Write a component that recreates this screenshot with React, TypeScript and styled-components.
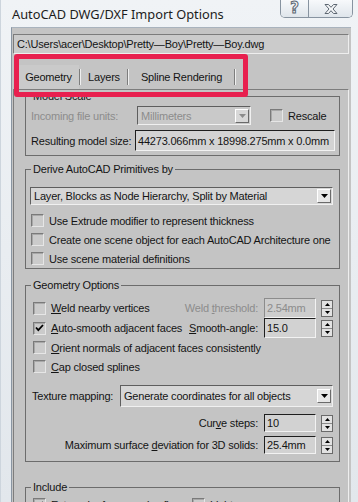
import React from "react";
import styled, { createGlobalStyle } from "styled-components";

const GlobalStyle = createGlobalStyle`
  *, *::before, *::after { box-sizing: border-box; }
  html, body { margin: 0; padding: 0; background: #e6ebf0; }
`;

const Window = styled.div`
  position: relative;
  width: 358px;
  height: 502px;
  overflow: hidden;
  display: flex;
  flex-direction: column;
  background: linear-gradient(#f0f3f6, #e2e7ec);
  border-left: 1px solid #cdd5dd;
`;

const TitleBar = styled.div`
  height: 27px;
  flex-shrink: 0;
  display: flex;
  align-items: flex-start;
  padding-left: 11px;
`;

const Title = styled.div`
  margin-top: 6px;
  font-family: "Noto Sans", "Open Sans", sans-serif;
  font-size: 12.8px;
  line-height: 17px;
  color: #1c1c1c;
`;

const CaptionButtons = styled.div`
  margin-left: auto;
  margin-right: 5px;
  height: 18px;
  display: flex;
  border: 1px solid #8793a0;
  border-top: none;
  border-radius: 0 0 5px 5px;
  overflow: hidden;
`;

const CaptionButton = styled.div<{ $w: number }>`
  width: ${(p) => p.$w}px;
  display: flex;
  align-items: center;
  justify-content: center;
  background: linear-gradient(#f7f9fb, #dfe5eb);
  & + & {
    border-left: 1px solid #8793a0;
  }
`;

const HelpGlyph = styled.span`
  font-family: "DejaVu Sans", sans-serif;
  font-size: 15px;
  font-weight: bold;
  line-height: 15px;
  color: #f4f6f8;
  -webkit-text-stroke: 1px #5d6772;
`;

const Client = styled.div`
  position: relative;
  flex: 1;
  margin: 0 7px 0 10px;
  padding: 6px 1px 0 1px;
  display: flex;
  flex-direction: column;
  background: #c4c4c4;
  border-left: 1px solid #8a96a3;
  border-top: 1px solid #a9b3bd;
  font-family: "Liberation Sans", Arial, sans-serif;
  font-size: 11px;
  letter-spacing: -0.2px;
  color: #141414;
`;

const PathField = styled.div`
  height: 20px;
  margin-right: 1px;
  display: flex;
  align-items: center;
  padding-left: 3px;
  background: #cbcbcb;
  border-top: 1px solid #7c7c7c;
  border-left: 1px solid #7c7c7c;
  border-bottom: 1px solid #eeeeee;
  border-right: 1px solid #eeeeee;
`;

const TabStrip = styled.div`
  height: 24px;
  margin-top: 11px;
  padding-left: 5px;
  display: flex;
  align-items: center;
`;

const Tab = styled.div<{ $w: number; $active?: boolean }>`
  width: ${(p) => p.$w}px;
  height: 100%;
  display: flex;
  align-items: center;
  justify-content: center;
  background: ${(p) => (p.$active ? "#cacaca" : "transparent")};
`;

const TabSep = styled.div`
  width: 2px;
  height: 16px;
  border-left: 1px solid #7d7d7d;
  border-right: 1px solid #efefef;
`;

const Panel = styled.div`
  flex: 1;
  margin-right: 1px;
  padding: 0 8px 0 11px;
  border-top: 1px solid #7d7d7d;
  border-left: 1px solid #7d7d7d;
  border-right: 1px solid #eeeeee;
`;

const Group = styled.fieldset<{ $mt: number }>`
  margin: ${(p) => p.$mt}px 0 0 0;
  padding: 0;
  min-width: 0;
  border: 1px solid #6c6c6c;
`;

const Legend = styled.legend`
  margin-left: 5px;
  padding: 0 2px;
  font-size: 11px;
  line-height: 12px;
`;

const GroupBody = styled.div<{ $pt: number; $pb: number; $pl: number }>`
  display: flex;
  flex-direction: column;
  padding: ${(p) => `${p.$pt}px 6px ${p.$pb}px ${p.$pl}px`};
`;

const Row = styled.div<{ $h: number; $mt?: number; $right?: boolean }>`
  height: ${(p) => p.$h}px;
  margin-top: ${(p) => p.$mt ?? 0}px;
  display: flex;
  align-items: center;
  justify-content: ${(p) => (p.$right ? "flex-end" : "flex-start")};
`;

const Label = styled.span<{ $w?: number; $disabled?: boolean; $mr?: number; $ml?: number; $push?: boolean }>`
  width: ${(p) => (p.$w ? `${p.$w}px` : "auto")};
  flex-shrink: 0;
  white-space: nowrap;
  margin-right: ${(p) => p.$mr ?? 0}px;
  margin-left: ${(p) => (p.$push ? "auto" : `${p.$ml ?? 0}px`)};
  color: ${(p) => (p.$disabled ? "#8c8c8c" : "#141414")};
`;

const Check = styled.span<{ $ml?: number }>`
  width: 13px;
  height: 13px;
  flex-shrink: 0;
  margin-left: ${(p) => p.$ml ?? 0}px;
  margin-right: 5px;
  display: flex;
  align-items: center;
  justify-content: center;
  background: #cbcbcb;
  border-top: 1px solid #7a7a7a;
  border-left: 1px solid #7a7a7a;
  border-bottom: 1px solid #e6e6e6;
  border-right: 1px solid #e6e6e6;
  box-shadow: inset 1px 1px 0 #a8a8a8;
`;

const Combo = styled.div<{ $w?: number; $disabled?: boolean; $grow?: boolean }>`
  width: ${(p) => (p.$w ? `${p.$w}px` : "auto")};
  flex: ${(p) => (p.$grow ? 1 : "none")};
  height: 100%;
  display: flex;
  align-items: center;
  padding: 0 1px 0 3px;
  background: ${(p) => (p.$disabled ? "#c9c9c9" : "#d6d6d6")};
  color: ${(p) => (p.$disabled ? "#8c8c8c" : "#141414")};
  border-top: 1px solid #5e5e5e;
  border-left: 1px solid #5e5e5e;
  border-bottom: 1px solid #f0f0f0;
  border-right: 1px solid #f0f0f0;
`;

const ComboText = styled.span`
  flex: 1;
  white-space: nowrap;
  overflow: hidden;
`;

const ComboArrow = styled.span<{ $disabled?: boolean }>`
  width: 14px;
  height: 14px;
  display: flex;
  align-items: center;
  justify-content: center;
  background: ${(p) => (p.$disabled ? "#d8d8d8" : "#e6e6e6")};
  border-top: 1px solid #ffffff;
  border-left: 1px solid #ffffff;
  border-bottom: 1px solid #6a6a6a;
  border-right: 1px solid #6a6a6a;
`;

const ValueField = styled.div<{ $w: number; $disabled?: boolean; $bright?: boolean }>`
  width: ${(p) => p.$w}px;
  height: 100%;
  flex-shrink: 0;
  display: flex;
  align-items: center;
  padding-left: 2px;
  white-space: nowrap;
  background: ${(p) => (p.$bright ? "#d3d3d3" : p.$disabled ? "#cdcdcd" : "#d2d2d2")};
  color: ${(p) => (p.$disabled ? "#8c8c8c" : "#141414")};
  border-top: 1px solid ${(p) => (p.$disabled ? "#8c8c8c" : "#1e1e1e")};
  border-left: 1px solid ${(p) => (p.$disabled ? "#8c8c8c" : "#1e1e1e")};
  border-bottom: 1px solid #f2f2f2;
  border-right: 1px solid #f2f2f2;
`;

const SpinnerBox = styled.span`
  width: 12px;
  height: 17px;
  margin-left: 5px;
  flex-shrink: 0;
  display: flex;
  flex-direction: column;
  background: #e2e2e2;
  border: 1px solid #6a6a6a;
`;

const SpinHalf = styled.span<{ $up?: boolean }>`
  flex: 1;
  display: flex;
  align-items: center;
  justify-content: center;
  border-bottom: ${(p) => (p.$up ? "1px solid #8a8a8a" : "none")};
`;

const Callout = styled.div`
  position: absolute;
  left: 13px;
  top: 54px;
  width: 234px;
  height: 43px;
  border: 5px solid #e8204f;
  border-radius: 3px;
  pointer-events: none;
`;

const CloseIcon = () => (
  <svg width="16" height="12" viewBox="0 0 16 12">
    <path
      d="M2 1.5h3.5L8 4.3l2.5-2.8H14L10 6l4 4.5h-3.5L8 7.7l-2.5 2.8H2L6 6z"
      fill="#f4f6f8"
      stroke="#5d6772"
      strokeWidth="1"
      strokeLinejoin="round"
    />
  </svg>
);

const DownTri = ({ color = "#000" }: { color?: string }) => (
  <svg width="7" height="4" viewBox="0 0 7 4">
    <path d="M0 0h7L3.5 4z" fill={color} />
  </svg>
);

const Tick = () => (
  <svg width="9" height="8" viewBox="0 0 9 8">
    <path d="M1 3.5l2.3 2.6L8 1" fill="none" stroke="#000" strokeWidth="1.8" />
  </svg>
);

const Spinner = () => (
  <SpinnerBox>
    <SpinHalf $up>
      <svg width="5" height="3" viewBox="0 0 5 3">
        <path d="M0 3h5L2.5 0z" fill="#000" />
      </svg>
    </SpinHalf>
    <SpinHalf>
      <svg width="5" height="3" viewBox="0 0 5 3">
        <path d="M0 0h5L2.5 3z" fill="#000" />
      </svg>
    </SpinHalf>
  </SpinnerBox>
);

interface DropProps {
  text: string;
  w?: number;
  grow?: boolean;
  disabled?: boolean;
}

const Dropdown = ({ text, w, grow, disabled }: DropProps) => (
  <Combo $w={w} $grow={grow} $disabled={disabled}>
    <ComboText>{text}</ComboText>
    <ComboArrow $disabled={disabled}>
      <DownTri color={disabled ? "#8c8c8c" : "#000"} />
    </ComboArrow>
  </Combo>
);

const App = () => {
  return (
    <>
      <GlobalStyle />
      <Window>
        <TitleBar>
          <Title>AutoCAD DWG/DXF Import Options</Title>
          <CaptionButtons>
            <CaptionButton $w={27}>
              <HelpGlyph>?</HelpGlyph>
            </CaptionButton>
            <CaptionButton $w={44}>
              <CloseIcon />
            </CaptionButton>
          </CaptionButtons>
        </TitleBar>

        <Client>
          <PathField>C:\Users\acer\Desktop\Pretty—Boy\Pretty—Boy.dwg</PathField>

          <TabStrip>
            <Tab $w={61} $active>Geometry</Tab>
            <TabSep />
            <Tab $w={46}>Layers</Tab>
            <TabSep />
            <Tab $w={105}>Spline Rendering</Tab>
            <TabSep />
          </TabStrip>

          <Panel>
            <Group $mt={0}>
              <Legend>Model Scale</Legend>
              <GroupBody $pt={4} $pb={4} $pl={5}>
                <Row $h={19}>
                  <Label $w={106} $disabled>Incoming file units:</Label>
                  <Dropdown text="Millimeters" w={114} disabled />
                  <Check $ml={19} />
                  <Label>Rescale</Label>
                </Row>
                <Row $h={21} $mt={5}>
                  <Label $w={104}>Resulting model size:</Label>
                  <ValueField $w={200} $bright>44273.066mm x 18998.275mm x 0.0mm</ValueField>
                </Row>
              </GroupBody>
            </Group>

            <Group $mt={7}>
              <Legend>Derive AutoCAD Primitives by</Legend>
              <GroupBody $pt={12} $pb={0} $pl={4}>
                <Row $h={18}>
                  <Dropdown text="Layer, Blocks as Node Hierarchy, Split by Material" grow />
                </Row>
                <Row $h={19} $mt={6}>
                  <Check $ml={1} />
                  <Label>Use Extrude modifier to represent thickness</Label>
                </Row>
                <Row $h={19}>
                  <Check $ml={1} />
                  <Label>Create one scene object for each AutoCAD Architecture one</Label>
                </Row>
                <Row $h={19}>
                  <Check $ml={1} />
                  <Label>Use scene material definitions</Label>
                </Row>
              </GroupBody>
            </Group>

            <Group $mt={10}>
              <Legend>Geometry Options</Legend>
              <GroupBody $pt={7} $pb={7} $pl={7}>
                <Row $h={20}>
                  <Check />
                  <Label>
                    <u>W</u>eld nearby vertices
                  </Label>
                  <Label $push $disabled $mr={6}>
                    Weld <u>t</u>hreshold:
                  </Label>
                  <ValueField $w={52} $disabled>2.54mm</ValueField>
                  <Spinner />
                </Row>
                <Row $h={20}>
                  <Check>
                    <Tick />
                  </Check>
                  <Label>
                    <u>A</u>uto-smooth adjacent faces
                  </Label>
                  <Label $push $mr={6}>
                    <u>S</u>mooth-angle:
                  </Label>
                  <ValueField $w={52}>15.0</ValueField>
                  <Spinner />
                </Row>
                <Row $h={19}>
                  <Check />
                  <Label>
                    <u>O</u>rient normals of adjacent faces consistently
                  </Label>
                </Row>
                <Row $h={19}>
                  <Check />
                  <Label>
                    <u>C</u>ap closed splines
                  </Label>
                </Row>
                <Row $h={22} $mt={9}>
                  <Label $w={88} $ml={-1}>Texture mapping:</Label>
                  <Dropdown text="Generate coordinates for all objects" grow />
                </Row>
                <Row $h={18} $mt={7} $right>
                  <Label $mr={6}>
                    Cur<u>v</u>e steps:
                  </Label>
                  <ValueField $w={52}>10</ValueField>
                  <Spinner />
                </Row>
                <Row $h={18} $mt={4} $right>
                  <Label $mr={6}>
                    Maximum surface <u>d</u>eviation for 3D solids:
                  </Label>
                  <ValueField $w={52}>25.4mm</ValueField>
                  <Spinner />
                </Row>
              </GroupBody>
            </Group>

            <Group $mt={19}>
              <Legend>Include</Legend>
              <GroupBody $pt={2} $pb={4} $pl={7}>
                <Row $h={19}>
                  <Check>
                    <Tick />
                  </Check>
                  <Label $w={141}>External references (xref)</Label>
                  <Check />
                  <Label>Lights</Label>
                </Row>
              </GroupBody>
            </Group>
          </Panel>
        </Client>

        <Callout />
      </Window>
    </>
  );
};

export default App;
